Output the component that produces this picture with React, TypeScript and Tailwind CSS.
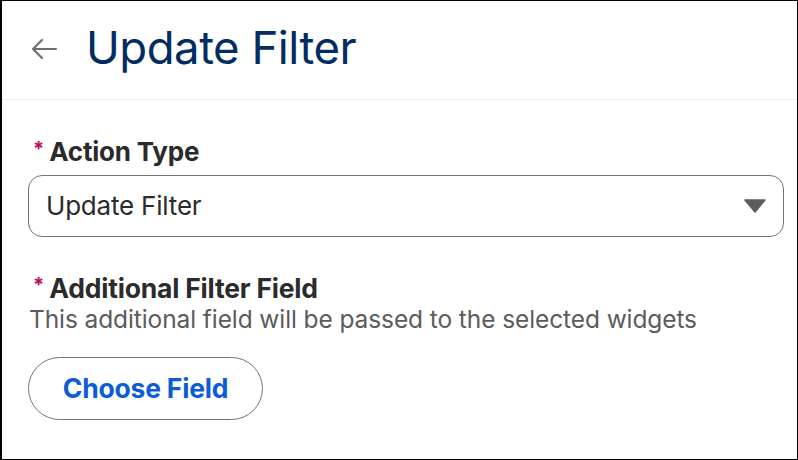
import React from "react";

export default function App() {
  return (
    <div
      className="w-[798px] h-[460px] bg-white border-black border-l-2 border-t border-r border-b flex flex-col overflow-hidden"
      style={{ fontFamily: "Inter, 'Liberation Sans', sans-serif" }}
    >
      <div className="h-[99px] flex items-center border-b border-[#ececec] shrink-0">
        <svg width="28" height="22" viewBox="0 0 28 22" className="ml-[28px] mt-[-2px]">
          <path d="M26 11H3M12 2L3 11l9 9" fill="none" stroke="#706e6b" strokeWidth="2.2" strokeLinecap="round" strokeLinejoin="round" />
        </svg>
        <h1 className="ml-[28px] text-[45.5px] leading-none text-[#032d60] tracking-[-0.5px] mt-[-4px]">Update Filter</h1>
      </div>
      <div className="pl-[26px] pr-[13px] pt-[37px] flex flex-col">
        <div className="flex items-center h-[30px]">
          <span className="text-[20px] font-bold leading-none ml-[5px] mr-[5px] mt-[-6px] text-[#ba0c5b]">*</span>
          <span className="text-[26px] font-bold text-[#2b2b2b] leading-none tracking-[-0.2px]">Action Type</span>
        </div>
        <div className="mt-[8px] h-[62px] border border-[#747474] rounded-[14px] flex items-center justify-between pl-[17px] pr-[17px]">
          <span className="text-[26px] text-[#2b2b2b] leading-none tracking-[-0.2px]">Update Filter</span>
          <svg width="22" height="14" viewBox="0 0 22 14">
            <path d="M1 1h20L11 13z" fill="#5c5c5c" stroke="#5c5c5c" strokeWidth="1.5" strokeLinejoin="round" />
          </svg>
        </div>
        <div className="flex items-center h-[30px] mt-[36px]">
          <span className="text-[20px] font-bold leading-none ml-[5px] mr-[5px] mt-[-6px] text-[#ba0c5b]">*</span>
          <span className="text-[26.5px] font-bold text-[#2b2b2b] leading-none tracking-[-0.2px]">Additional Filter Field</span>
        </div>
        <div className="text-[24.5px] text-[#5c5c5c] leading-none mt-[4px] ml-[1px] tracking-[-0.1px]">
          This additional field will be passed to the selected widgets
        </div>
        <button className="mt-[25px] w-[235px] h-[63px] border border-[#747474] rounded-full bg-white flex items-center justify-center">
          <span className="text-[26.5px] font-bold text-[#0b5cd5] leading-none tracking-[-0.2px]">Choose Field</span>
        </button>
      </div>
    </div>
  );
}
